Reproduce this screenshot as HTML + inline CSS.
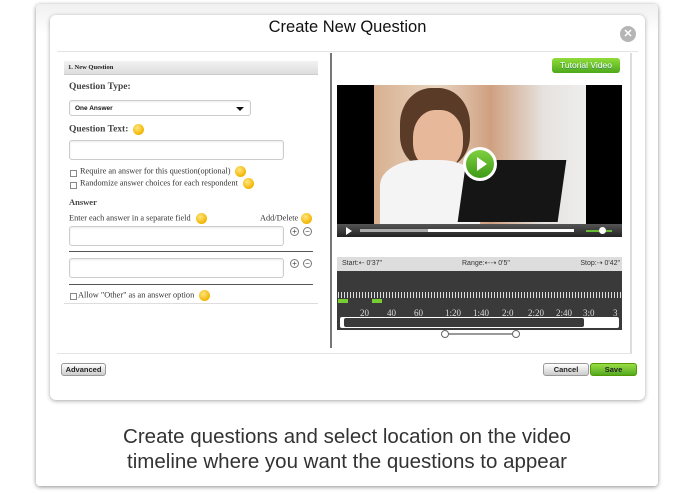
<!DOCTYPE html>
<html><head><style>
*{margin:0;padding:0;box-sizing:border-box}
body{width:695px;height:494px;background:#fff;position:relative;overflow:hidden;font-family:"Liberation Serif",serif;color:#333}
.a{position:absolute}
.card{left:36px;top:4px;width:622px;height:482px;border-radius:4px;box-shadow:0 1px 4px rgba(0,0,0,.45);background:linear-gradient(#f0f0f0,#fff 30px)}
.dlg{left:50px;top:15px;width:595px;height:385px;background:#fff;border-radius:6px;box-shadow:0 1px 4px rgba(0,0,0,.35)}
.in{background:#fff;border:1px solid #ccc;border-radius:3px;box-shadow:inset 0 1px 2px rgba(0,0,0,.08)}
.dot{display:inline-block;vertical-align:middle;margin-left:5px;width:11px;height:11px;border-radius:50%;background:radial-gradient(circle at 40% 35%,#ffe680,#f2b500 70%,#d89a00)}
.cb{width:7px;height:7px;border:1px solid #888;background:#fff}
.t{font-size:8.3px;white-space:nowrap}
.pm{width:9px;height:9px;border:1px solid #777;border-radius:50%;font:8px/7px "Liberation Sans",sans-serif;text-align:center;color:#444}
.btn{border:1px solid #999;border-radius:3px;background:linear-gradient(#fff,#ccc);font:bold 7.5px/11px "Liberation Sans",sans-serif;text-align:center;color:#222}
.tk{font-size:9px;color:#ddd}
</style></head><body>
<div class="a card"></div>
<div class="a dlg"></div>
<div class="a" style="left:50px;top:18px;width:595px;text-align:center;font:16.5px 'Liberation Sans',sans-serif;color:#111">Create New Question</div>
<div class="a" style="left:620px;top:26px;width:16px;height:16px;border-radius:50%;background:#b5b5b5;color:#fff;font:bold 11px/16px 'Liberation Sans',sans-serif;text-align:center">✕</div>
<div class="a" style="left:57px;top:51px;width:581px;height:1px;background:#e4e4e4"></div>
<div class="a" style="left:330px;top:53px;width:2px;height:295px;background:#777"></div>
<div class="a" style="left:630px;top:53px;width:2px;height:300px;background:#ddd"></div>
<div class="a" style="left:57px;top:353px;width:575px;height:1px;background:#e4e4e4"></div>
<!-- left -->
<div class="a" style="left:64px;top:61px;width:254px;height:14px;background:linear-gradient(#f2f2f2,#ddd);border-bottom:1px solid #ccc;font:bold 6.5px/14px 'Liberation Serif',serif;padding-left:4px;color:#222">1. New Question</div>
<div class="a" style="left:69px;top:82px;font-size:9.5px;font-weight:bold;color:#444">Question Type:</div>
<div class="a in" style="left:69px;top:100px;width:182px;height:16px;font:bold 6.5px/15px 'Liberation Sans',sans-serif;padding-left:5px;color:#111;border-radius:3px">One Answer<span class="a" style="right:6px;top:6px;border-left:4px solid transparent;border-right:4px solid transparent;border-top:4px solid #111"></span></div>
<div class="a" style="left:69px;top:124px;font-size:9.5px;font-weight:bold;color:#444">Question Text:<span class="dot"></span></div>
<div class="a in" style="left:69px;top:140px;width:215px;height:20px"></div>
<div class="a cb" style="left:70px;top:170px"></div><div class="a t" style="left:80px;top:166px">Require an answer for this question(optional)<span class="dot"></span></div>
<div class="a cb" style="left:70px;top:182px"></div><div class="a t" style="left:80px;top:178px">Randomize answer choices for each respondent<span class="dot"></span></div>
<div class="a" style="left:69px;top:197px;font-size:8.5px;font-weight:bold;color:#444">Answer</div>
<div class="a t" style="left:69px;top:213px">Enter each answer in a separate field<span class="dot"></span></div>
<div class="a t" style="left:260px;top:213px">Add/Delete<span class="dot" style="margin-left:3px"></span></div>
<div class="a in" style="left:69px;top:226px;width:215px;height:20px"></div>
<div class="a pm" style="left:290px;top:227px">+</div><div class="a pm" style="left:303px;top:227px">−</div>
<div class="a" style="left:69px;top:251px;width:244px;height:1px;background:#555"></div>
<div class="a in" style="left:69px;top:258px;width:215px;height:20px"></div>
<div class="a pm" style="left:290px;top:259px">+</div><div class="a pm" style="left:303px;top:259px">−</div>
<div class="a" style="left:69px;top:284px;width:244px;height:1px;background:#555"></div>
<div class="a cb" style="left:70px;top:293px"></div><div class="a t" style="left:78px;top:290px">Allow "Other" as an answer option<span class="dot"></span></div>
<div class="a" style="left:64px;top:303px;width:254px;height:1px;background:#ddd"></div>
<!-- right -->
<div class="a" style="left:552px;top:58px;width:68px;height:15px;border-radius:3px;background:linear-gradient(#8fdc3a,#4ea81a);color:#fff;font:8.5px/15px 'Liberation Sans',sans-serif;text-align:center;text-shadow:0 1px 0 #386">Tutorial Video</div>
<div class="a" style="left:337px;top:85px;width:285px;height:139px;background:#000"></div>
<div class="a" style="left:374px;top:85px;width:212px;height:139px;background:linear-gradient(90deg,#d8b090 0%,#e8d4c0 30%,#cfa080 55%,#e6e2de 80%,#eee 100%)"></div>
<div class="a" style="left:400px;top:88px;width:70px;height:80px;border-radius:45% 45% 40% 40%;background:#5a3b28"></div>
<div class="a" style="left:413px;top:110px;width:50px;height:60px;border-radius:45%;background:#e8b89a"></div>
<div class="a" style="left:380px;top:160px;width:100px;height:64px;border-radius:40% 40% 0 0;background:#f4f4f4"></div>
<div class="a" style="left:462px;top:160px;width:100px;height:62px;background:#151515;transform:skewX(-8deg)"></div>
<div class="a" style="left:463px;top:147px;width:34px;height:34px;border-radius:50%;background:#fff"></div>
<div class="a" style="left:466px;top:150px;width:28px;height:28px;border-radius:50%;background:linear-gradient(#7fd040,#3e9a18)"></div>
<div class="a" style="left:477px;top:157px;border-top:7px solid transparent;border-bottom:7px solid transparent;border-left:10px solid #fff"></div>
<div class="a" style="left:337px;top:224px;width:285px;height:13px;background:linear-gradient(#555,#222)"></div>
<div class="a" style="left:346px;top:227px;border-top:4px solid transparent;border-bottom:4px solid transparent;border-left:6px solid #fff"></div>
<div class="a" style="left:360px;top:229px;width:214px;height:3px;background:#fff"></div>
<div class="a" style="left:360px;top:229px;width:68px;height:3px;background:#aaa"></div>
<div class="a" style="left:586px;top:230px;width:26px;height:2px;background:#6b3"></div>
<div class="a" style="left:599px;top:227px;width:7px;height:7px;border-radius:50%;background:#fff"></div>
<div class="a" style="left:337px;top:257px;width:285px;height:14px;background:#ddd;font:7px/14px 'Liberation Sans',sans-serif;color:#333"><span class="a" style="left:5px">Start:⇠ 0'37"</span><span class="a" style="left:125px">Range:⇠⇢ 0'5"</span><span class="a" style="right:2px">Stop:⇢ 0'42"</span></div>
<div class="a" style="left:337px;top:271px;width:285px;height:59px;background:#3a3a3a"></div>
<div class="a" style="left:338px;top:292px;width:283px;height:6px;background:repeating-linear-gradient(90deg,#ddd 0 1px,transparent 1px 3px)"></div>
<div class="a" style="left:338px;top:299px;width:10px;height:4px;background:#7c3"></div>
<div class="a" style="left:372px;top:299px;width:10px;height:4px;background:#7c3"></div>
<div class="a tk" style="left:360px;top:308px">20</div><div class="a tk" style="left:387px;top:308px">40</div><div class="a tk" style="left:414px;top:308px">60</div><div class="a tk" style="left:445px;top:308px">1:20</div><div class="a tk" style="left:473px;top:308px">1:40</div><div class="a tk" style="left:502px;top:308px">2:0</div><div class="a tk" style="left:528px;top:308px">2:20</div><div class="a tk" style="left:556px;top:308px">2:40</div><div class="a tk" style="left:583px;top:308px">3:0</div><div class="a tk" style="left:613px;top:308px">3</div>
<div class="a" style="left:340px;top:317px;width:279px;height:11px;background:#fff;border-radius:2px"></div>
<div class="a" style="left:344px;top:318px;width:240px;height:9px;background:#3a3a3a;border-radius:2px"></div>
<div class="a" style="left:442px;top:333px;width:75px;height:2px;background:#999"></div>
<div class="a" style="left:441px;top:330px;width:8px;height:8px;border:1px solid #666;border-radius:50%;background:#fff"></div>
<div class="a" style="left:512px;top:330px;width:8px;height:8px;border:1px solid #666;border-radius:50%;background:#fff"></div>
<!-- buttons -->
<div class="a btn" style="left:61px;top:363px;width:45px;height:13px">Advanced</div>
<div class="a btn" style="left:543px;top:363px;width:46px;height:13px">Cancel</div>
<div class="a btn" style="left:590px;top:363px;width:47px;height:13px;background:linear-gradient(#9d4,#5a2);border-color:#590">Save</div>
<div class="a" style="left:36px;top:424px;width:622px;text-align:center;font:20.5px/25px 'Liberation Sans',sans-serif;color:#333">Create questions and select location on the video<br>timeline where you want the questions to appear</div>
</body></html>
